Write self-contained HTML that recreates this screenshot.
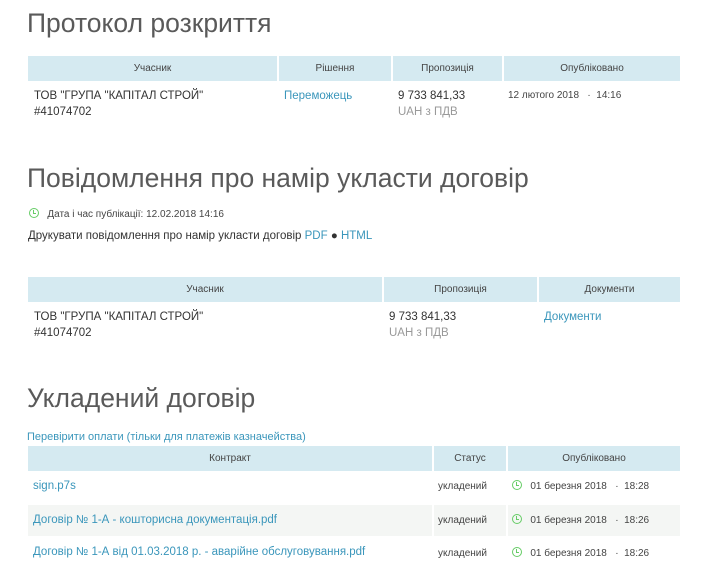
<!DOCTYPE html>
<html><head><meta charset="utf-8"><style>
body{margin:0;width:720px;height:587px;background:#fff;font-family:"Liberation Sans",sans-serif;color:#333;position:relative;overflow:hidden}
.a{position:absolute;white-space:nowrap}
h1{position:absolute;margin:0;font-weight:normal;font-size:26.5px;color:#5a5a5a;left:27px;white-space:nowrap;letter-spacing:0px}
.hd{position:absolute;left:28px;width:652px;height:25px;background:#d5eaf1}
.hd div{position:absolute;top:0;height:25px;line-height:25px;font-size:10px;color:#444;text-align:center;border-left:2px solid #fff;box-sizing:border-box}
.hd div:first-child{border-left:none}
.t{font-size:11.5px;color:#333}
.l{color:#3a96bb}
.g{color:#999}
.s{font-size:10px;color:#444}
.clk{display:inline-block;width:8px;height:8px;border:1.5px solid #6c6;border-radius:50%;position:relative;vertical-align:-1px}
.clk:after{content:"";position:absolute;left:3px;top:1px;width:2px;height:3px;border-left:1.2px solid #6c6;border-bottom:1.2px solid #6c6}
</style></head><body>
<h1 style="top:8px">Протокол розкриття</h1>
<div class="hd" style="top:56px">
<div style="left:0;width:249px">Учасник</div>
<div style="left:249px;width:114px">Рішення</div>
<div style="left:363px;width:111px">Пропозиція</div>
<div style="left:474px;width:178px">Опубліковано</div>
</div>
<div class="a t" style="left:34px;top:90px">ТОВ "ГРУПА "КАПІТАЛ СТРОЙ"</div>
<div class="a t" style="left:34px;top:106px">#41074702</div>
<div class="a t l" style="left:284px;top:90px">Переможець</div>
<div class="a t" style="left:398px;top:90px">9 733 841,33</div>
<div class="a t g" style="left:398px;top:106px">UAH з ПДВ</div>
<div class="a s" style="left:508px;top:90px">12 лютого 2018 &nbsp;&nbsp;· &nbsp;14:16</div>

<h1 style="top:163px">Повідомлення про намір укласти договір</h1>
<div class="a s" style="left:29px;top:208px"><span class="clk"></span>&nbsp;&nbsp; Дата і час публікації: 12.02.2018 14:16</div>
<div class="a t" style="left:28px;top:230px">Друкувати повідомлення про намір укласти договір <span class="l">PDF</span> ● <span class="l">HTML</span></div>

<div class="hd" style="top:277px">
<div style="left:0;width:354px">Учасник</div>
<div style="left:354px;width:155px">Пропозиція</div>
<div style="left:509px;width:143px">Документи</div>
</div>
<div class="a t" style="left:34px;top:311px">ТОВ "ГРУПА "КАПІТАЛ СТРОЙ"</div>
<div class="a t" style="left:34px;top:327px">#41074702</div>
<div class="a t" style="left:389px;top:311px">9 733 841,33</div>
<div class="a t g" style="left:389px;top:327px">UAH з ПДВ</div>
<div class="a t l" style="left:544px;top:311px">Документи</div>

<h1 style="top:383px">Укладений договір</h1>
<div class="a t l" style="left:27px;top:431px;font-size:11px">Перевірити оплати (тільки для платежів казначейства)</div>
<div class="hd" style="top:446px">
<div style="left:0;width:404px">Контракт</div>
<div style="left:404px;width:74px">Статус</div>
<div style="left:478px;width:174px">Опубліковано</div>
</div>
<div class="a" style="left:28px;top:505px;width:652px;height:31px;background:#f4f6f4"></div>
<div class="a" style="left:432px;top:505px;width:2px;height:31px;background:#fff"></div>
<div class="a" style="left:506px;top:505px;width:2px;height:31px;background:#fff"></div>
<div class="a t l" style="left:33px;top:480px">sign.p7s</div>
<div class="a t l" style="left:33px;top:514px">Договір № 1-А - кошторисна документація.pdf</div>
<div class="a t l" style="left:33px;top:546px">Договір № 1-А від 01.03.2018 р. - аварійне обслуговування.pdf</div>
<div class="a s" style="left:438px;top:481px">укладений</div>
<div class="a s" style="left:438px;top:515px">укладений</div>
<div class="a s" style="left:438px;top:548px">укладений</div>
<div class="a s" style="left:512px;top:480px"><span class="clk"></span>&nbsp;&nbsp; 01 березня 2018 &nbsp;&nbsp;· &nbsp;18:28</div>
<div class="a s" style="left:512px;top:514px"><span class="clk"></span>&nbsp;&nbsp; 01 березня 2018 &nbsp;&nbsp;· &nbsp;18:26</div>
<div class="a s" style="left:512px;top:547px"><span class="clk"></span>&nbsp;&nbsp; 01 березня 2018 &nbsp;&nbsp;· &nbsp;18:26</div>
</body></html>
